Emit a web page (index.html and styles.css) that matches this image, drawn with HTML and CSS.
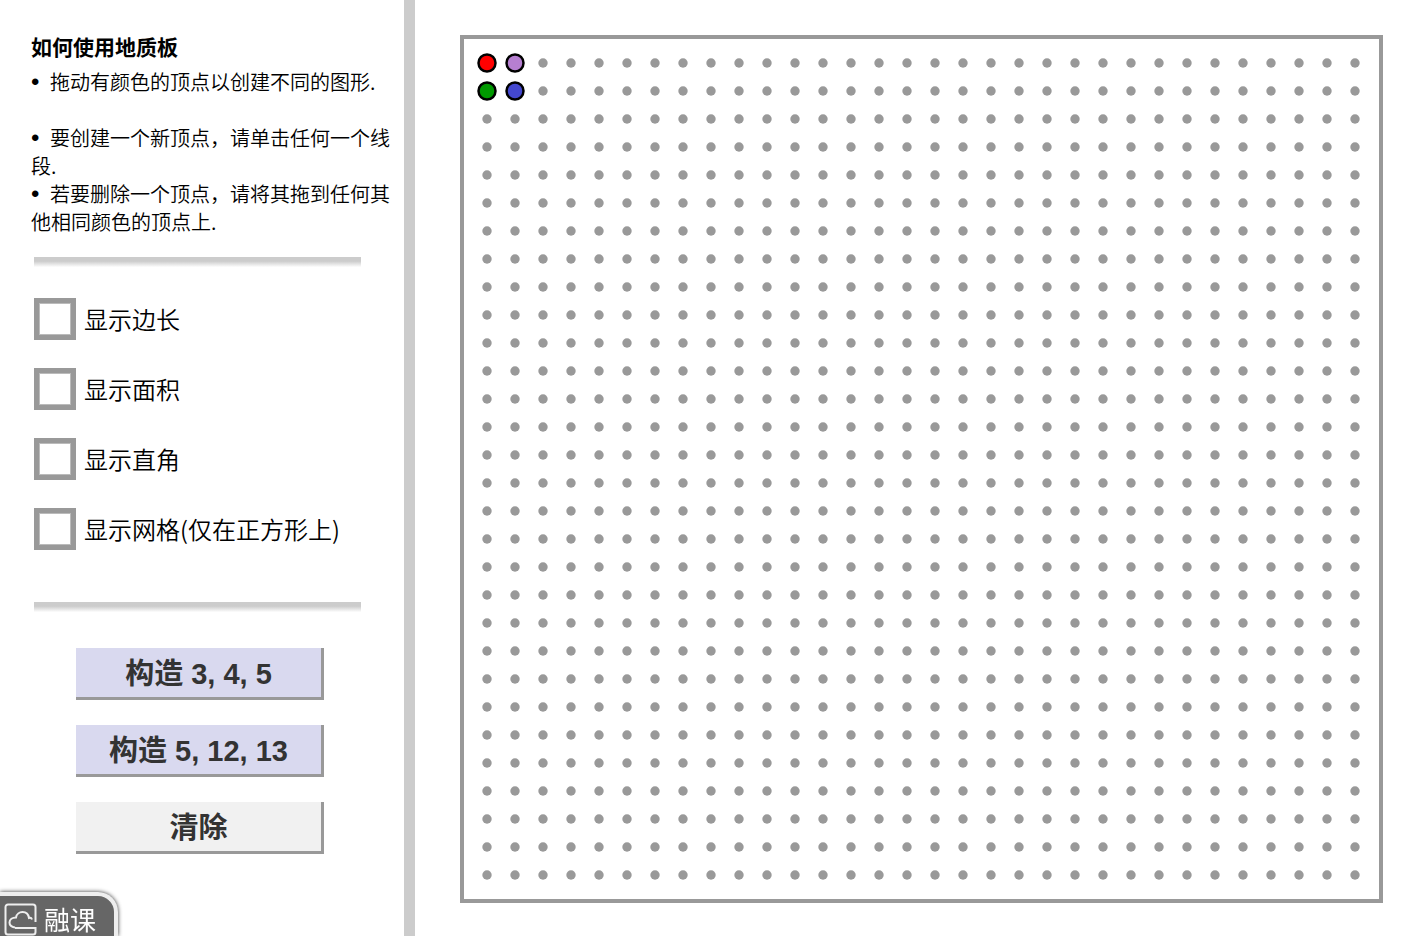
FILE: index.html
```
<!DOCTYPE html>
<html lang="zh-CN">
<head>
	<title>地质板</title>
	<meta charset="utf-8">
	<link rel="stylesheet" href="styles.css">
</head>
<body>
	<div class="container">
		<div class="sidebar">
			<div class="intro">
				<h2>如何使用地质板</h2>
				<ul>
					<li>拖动有颜色的顶点以创建不同的图形.</li>
					<li>要创建一个新顶点，请单击任何一个线段.</li>
					<li>若要删除一个顶点，请将其拖到任何其他相同颜色的顶点上.</li>
				</ul>
			</div>
			<div class="line"></div>
			<div class="options">
				<label for="show-length"><input type="checkbox" id="show-length">显示边长</label>
				<label for="show-area"><input type="checkbox" id="show-area">显示面积</label>
				<label for="show-angle"><input type="checkbox" id="show-angle">显示直角</label>
				<label for="show-grid"><input type="checkbox" id="show-grid">显示网格(仅在正方形上)</label>
			</div>
			<div class="line"></div>
			<div class="buttons">
				<button type="button">构造 3, 4, 5</button>
				<button type="button">构造 5, 12, 13</button>
				<button type="button" class="clear">清除</button>
			</div>
		</div>

		<div class="board">
			<svg viewBox="0 0 915 860">
				<defs>
					<pattern id="pegs" x="9" y="10" width="28" height="28" patternUnits="userSpaceOnUse">
						<circle cx="14" cy="14" r="4.7" fill="#999"/>
					</pattern>
				</defs>
				<rect x="9" y="10" width="896" height="840" fill="url(#pegs)"/>
				<g class="vertex">
					<circle cx="23" cy="24" r="8.5" fill="#f00"/>
					<circle cx="51" cy="24" r="8.5" fill="#b67fd1"/>
					<circle cx="23" cy="52" r="8.5" fill="#090"/>
					<circle cx="51" cy="52" r="8.5" fill="#4448cf"/>
				</g>
			</svg>
		</div>
	</div>

	<div class="badge">
		<svg viewBox="0 0 34 34" width="34" height="34">
			<path d="M31.500 20V5a2.500 2.500 0 0 0-2.500-2.500H4A2.500 2.500 0 0 0 1.500 5v25A2.500 2.500 0 0 0 4 32.500h25a2.500 2.500 0 0 0 2.500-2.500v-4H11"/>
			<path d="M11 25.500c-3-.5-5.500-2-5.500-5 0-3 3-5 6.500-5 .5-3.500 3.500-5.500 6.500-5.500 3.500 0 6 2.500 6.500 6 1.500-.5 2.500 0 3 1.500"/>
		</svg>
		<span>融课</span>
	</div>
</body>
</html>
```
FILE: styles.css
```
*{
	padding: 0;
	margin: 0;
	box-sizing: border-box;
}
body{
	font-family: "Noto Sans CJK SC", sans-serif;
	color: #000;
	background-color: #fff;
}
.container{
	display: flex;
	min-height: 100vh;
}

.sidebar{
	flex: none;
	width: 415px;
	padding-top: 32px;
	border-right: 11px solid #ccc;
}
.intro{
	padding-left: 31px;
	font-size: 20px;
	line-height: 28px;
	font-weight: 350;
}
.intro h2{
	margin-bottom: 8px;
	font-size: 21px;
	font-weight: bold;
}
.intro ul{
	list-style: none;
}
.intro li:first-child{
	margin-bottom: 28px;
}
.intro li::before{
	content: "•";
	display: inline-block;
	width: 19px;
	vertical-align: top;
	font-family: "Liberation Sans", sans-serif;
	font-size: 24px;
}
.line{
	height: 12px;
	margin: 21px 43px 0 34px;
	background: linear-gradient(#ccc 35%, #fff 85%);
}

.options{
	display: flex;
	flex-direction: column;
	gap: 28px;
	padding: 29px 0 31px 34px;
}
.options label{
	display: flex;
	align-items: center;
	gap: 8px;
	font-size: 24px;
	line-height: 40px;
	font-weight: 350;
}
.options input{
	appearance: none;
	width: 42px;
	height: 42px;
	border: 5px solid #999;
	box-shadow: inset 0 0 0 1px #bbb;
}
.options input:checked{
	background-color: #999;
}

.buttons{
	display: flex;
	flex-direction: column;
	gap: 25px;
	padding: 34px 80px 0 76px;
}
.buttons button{
	height: 52px;
	padding-bottom: 3px;
	border: 0;
	border-right: 3px solid #999;
	border-bottom: 3px solid #999;
	background-color: #d9d9ef;
	color: #333;
	font: bold 29px "Liberation Sans", "Noto Sans CJK SC", sans-serif;
}
.buttons .clear{
	background-color: #f1f1f1;
}

.board{
	flex: 1;
	align-self: flex-start;
	margin: 35px 30px 33px 45px;
	border: 4px solid #999;
}
.board svg{
	display: block;
	width: 100%;
}
.vertex{
	stroke: #000;
	stroke-width: 2.5;
}

.badge{
	position: fixed;
	left: 0;
	bottom: 0;
	display: flex;
	align-items: center;
	gap: 6px;
	padding: 6px 18px 0 4px;
	border-top: 4px solid #eee;
	border-right: 4px solid #eee;
	border-radius: 0 20px 0 0;
	background-color: #666;
	box-shadow: 0 0 4px #333;
	color: #fff;
	font-size: 26px;
	line-height: 34px;
}
.badge svg{
	fill: none;
	stroke: #eee;
	stroke-width: 2;
}
```
